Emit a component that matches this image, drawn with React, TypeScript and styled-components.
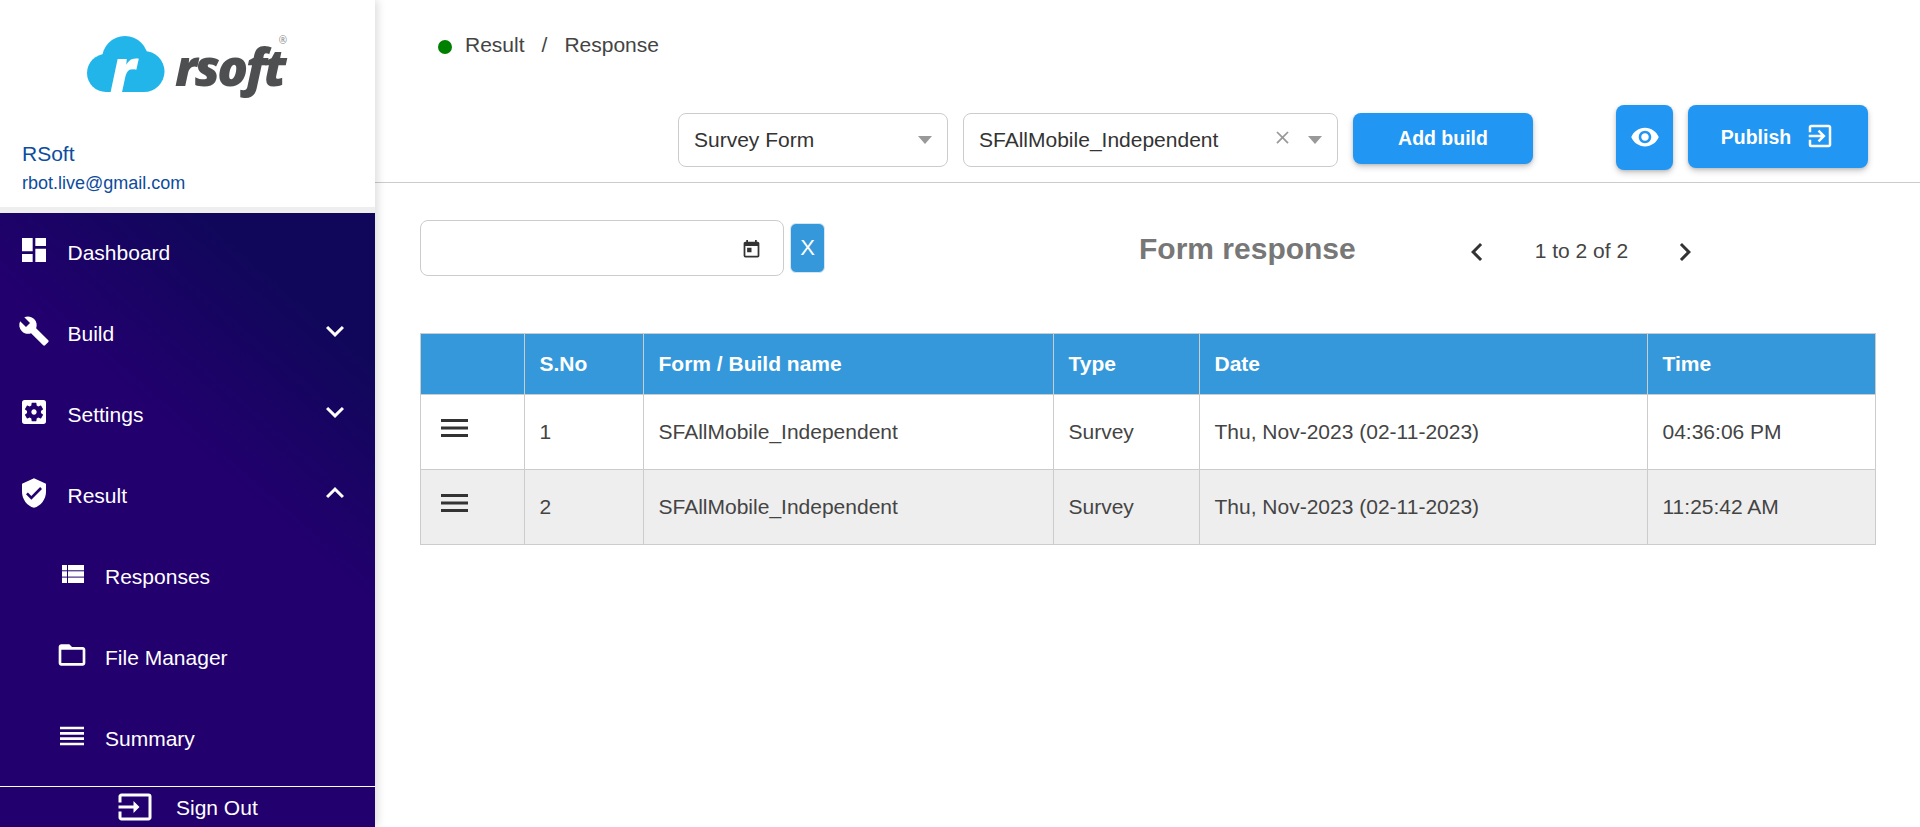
import React from "react";
import styled, { createGlobalStyle } from "styled-components";
import {
  MdDashboard,
  MdBuild,
  MdSettingsApplications,
  MdVerifiedUser,
  MdFolderOpen,
  MdReorder,
  MdInput,
  MdExpandMore,
  MdExpandLess,
  MdVisibility,
  MdOutlineExitToApp,
  MdToday,
  MdChevronLeft,
  MdChevronRight,
  MdClose,
} from "react-icons/md";

const GlobalStyle = createGlobalStyle`
  html, body {
    margin: 0;
    padding: 0;
    background: #fff;
    font-family: "Liberation Sans", Arial, sans-serif;
    font-size: 21px;
    color: #444;
  }
  * { box-sizing: border-box; }
`;

const Page = styled.div`
  display: flex;
  width: 1920px;
  height: 827px;
  overflow: hidden;
`;

const Sidebar = styled.aside`
  flex: 0 0 375px;
  height: 827px;
  display: flex;
  flex-direction: column;
  box-shadow: 3px 0 8px rgba(0, 0, 0, 0.13);
  position: relative;
  z-index: 2;
`;

const SideHead = styled.div`
  height: 213px;
  background: #fff;
  border-bottom: 6px solid #eee;
`;

const LogoRow = styled.div`
  height: 141px;
  padding: 36px 0 0 87px;
  display: flex;
  align-items: flex-start;
`;

const LogoWord = styled.div`
  position: relative;
  margin-left: 10px;
  margin-top: -3px;
  font-family: "Open Sans", sans-serif;
  font-style: italic;
  font-weight: 800;
  font-size: 51px;
  line-height: 66px;
  letter-spacing: -2.8px;
  color: #4d4f51;
`;

const Registered = styled.span`
  position: absolute;
  top: 1px;
  right: -3px;
  font-size: 10px;
  line-height: 12px;
  letter-spacing: 0;
  font-style: normal;
  font-weight: 400;
  color: #888;
`;

const Profile = styled.div`
  padding-left: 22px;
  color: #0d4c9e;
`;

const ProfileName = styled.div`
  font-size: 21px;
  line-height: 26px;
`;

const ProfileMail = styled.div`
  font-size: 18px;
  line-height: 24px;
  margin-top: 4px;
`;

const SideBody = styled.div`
  flex: 1;
  display: flex;
  flex-direction: column;
  background: linear-gradient(41deg, #22006e 58%, #10075a 84%);
`;

const Menu = styled.nav`
  flex: 1;
`;

const MenuItem = styled.div<{ $sub?: boolean }>`
  height: 81px;
  padding: 0 22px 1px ${(p) => (p.$sub ? "56px" : "18px")};
  display: flex;
  align-items: center;
  color: #fff;
  font-size: 21px;
`;

const MenuIcon = styled.span<{ $sub?: boolean }>`
  flex: 0 0 32px;
  height: 32px;
  margin-top: -7px;
  margin-right: ${(p) => (p.$sub ? "17px" : "17.5px")};
  font-size: 32px;
  line-height: 0;
`;

const MenuLabel = styled.span`
  flex: 1;
`;

const Caret = styled.span`
  font-size: 36px;
  line-height: 0;
  margin-top: -7px;
`;

const SignOut = styled.div`
  height: 41px;
  border-top: 1px solid #fff;
  padding: 1px 0 0 117px;
  display: flex;
  align-items: center;
  gap: 23px;
  color: #fff;
  font-size: 21px;
`;

const SignOutIcon = styled.span`
  font-size: 36px;
  line-height: 0;
  margin-top: -1px;
`;

const Main = styled.main`
  flex: 1;
  min-width: 0;
`;

const TopBar = styled.header`
  height: 183px;
  border-bottom: 1px solid #ccc;
`;

const Crumbs = styled.div`
  height: 105px;
  padding: 32px 0 0 63px;
  display: flex;
  align-items: flex-start;
  line-height: 26px;
`;

const Dot = styled.span`
  width: 14px;
  height: 14px;
  margin: 7.5px 13px 0 0;
  border-radius: 50%;
  background: #008000;
`;

const Slash = styled.span`
  margin: 0 17px;
`;

const Toolbar = styled.div`
  display: flex;
  align-items: flex-start;
  padding-left: 303px;
`;

const Select = styled.div<{ $width: number; $gap: number }>`
  width: ${(p) => p.$width}px;
  height: 54px;
  margin: 8px ${(p) => p.$gap}px 0 0;
  padding: 0 16px 0 15px;
  display: flex;
  align-items: center;
  background: #fff;
  border: 1px solid #ccc;
  border-radius: 8px;
  color: #333;
`;

const SelectValue = styled.span`
  flex: 1;
`;

const ClearIcon = styled.span`
  font-size: 21px;
  line-height: 0;
  color: #999;
  margin: -6px 15px 0 0;
`;

const Arrow = styled.span`
  width: 0;
  height: 0;
  border-left: 7px solid transparent;
  border-right: 7px solid transparent;
  border-top: 8px solid #999;
  margin-right: -1px;
`;

const Button = styled.button<{ $width: number; $height: number; $top: number; $left: number }>`
  width: ${(p) => p.$width}px;
  height: ${(p) => p.$height}px;
  margin: ${(p) => p.$top}px 0 0 ${(p) => p.$left}px;
  padding: 0;
  display: flex;
  align-items: center;
  justify-content: center;
  border: 0;
  border-radius: 8px;
  background: #2196f3;
  color: #fff;
  font-family: inherit;
  font-size: 19.5px;
  font-weight: 700;
  box-shadow: 0 3px 6px rgba(0, 0, 0, 0.2), 0 1px 3px rgba(0, 0, 0, 0.12);
`;

const ButtonText = styled.span`
  padding-top: 2px;
`;

const ButtonIcon = styled.span<{ $size: number; $gap?: number }>`
  font-size: ${(p) => p.$size}px;
  line-height: 0;
  margin-left: ${(p) => p.$gap ?? 0}px;
  margin-top: -2px;
`;

const Content = styled.section`
  padding: 37px 45px 0;
`;

const FilterRow = styled.div`
  height: 56px;
  margin-bottom: 57px;
  display: flex;
  align-items: flex-start;
`;

const DateInput = styled.div`
  width: 364px;
  height: 56px;
  padding: 2px 21px 0 0;
  display: flex;
  align-items: center;
  justify-content: flex-end;
  border: 1px solid #ccc;
  border-radius: 8px;
  color: #333;
  font-size: 21px;
`;

const ClearButton = styled.button`
  width: 35px;
  height: 50px;
  margin: 3px 0 0 6px;
  padding: 0;
  border: 1px solid #d5e6f3;
  border-radius: 6px;
  background: #3498db;
  color: #fff;
  font-family: inherit;
  font-size: 22px;
`;

const Title = styled.h2`
  margin: 7px 0 0 314px;
  font-size: 30px;
  line-height: 44px;
  font-weight: 700;
  color: #777;
`;

const Pager = styled.div`
  margin: 12px 0 0 103px;
  display: flex;
  align-items: center;
  color: #444;
  line-height: 36px;
`;

const PagerIcon = styled.span`
  font-size: 36px;
  line-height: 0;
  color: #333;
  margin-top: 2px;
`;

const PagerText = styled.span`
  margin: 0 39px 0 40px;
`;

const Table = styled.table`
  width: 1455px;
  table-layout: fixed;
  border-collapse: collapse;
  font-size: 21px;
  color: #444;
`;

const Th = styled.th<{ $width: number }>`
  width: ${(p) => p.$width}px;
  height: 61px;
  padding: 0 15px;
  border: 1px solid #ccc;
  background: #3498db;
  color: #fff;
  font-size: 21px;
  font-weight: 700;
  text-align: left;
`;

const Row = styled.tr<{ $shaded?: boolean }>`
  background: ${(p) => (p.$shaded ? "#eee" : "#fff")};
`;

const Td = styled.td`
  height: 75px;
  padding: 0 15px;
  border: 1px solid #ccc;
`;

const Handle = styled.svg`
  display: block;
  margin: -8px 0 0 5px;
`;

const columns = [
  { label: "", width: 103.5 },
  { label: "S.No", width: 119 },
  { label: "Form / Build name", width: 410 },
  { label: "Type", width: 146 },
  { label: "Date", width: 448 },
  { label: "Time", width: 228.5 },
];

const rows = [
  { no: 1, name: "SFAllMobile_Independent", type: "Survey", date: "Thu, Nov-2023 (02-11-2023)", time: "04:36:06 PM" },
  { no: 2, name: "SFAllMobile_Independent", type: "Survey", date: "Thu, Nov-2023 (02-11-2023)", time: "11:25:42 AM" },
];

const CloudMark = () => (
  <svg width="78" height="57" viewBox="87 36 78 57" overflow="visible">
    <g fill="#21b5ea">
      <circle cx="106" cy="73" r="19" />
      <circle cx="125" cy="59" r="23" />
      <circle cx="144" cy="71.5" r="20.5" />
      <rect x="106" y="70" width="38" height="22" />
    </g>
    <text x="110" y="92" fontFamily="'Open Sans', sans-serif" fontStyle="italic" fontWeight="800" fontSize="60" fill="#fff">
      r
    </text>
  </svg>
);

const HandleIcon = () => (
  <Handle width="27" height="18" viewBox="0 0 27 18" fill="#333">
    <rect y="0" width="27" height="3" />
    <rect y="7.5" width="27" height="3" />
    <rect y="15" width="27" height="3" />
  </Handle>
);

const ResponsesIcon = () => (
  <svg width="32" height="32" viewBox="0 0 32 32" fill="currentColor">
    <rect x="6" y="7" width="5" height="5.3" />
    <rect x="6" y="13.3" width="5" height="5.3" />
    <rect x="6" y="19.6" width="5" height="5.4" />
    <rect x="12" y="7" width="16" height="5.3" />
    <rect x="12" y="13.3" width="16" height="5.3" />
    <rect x="12" y="19.6" width="16" height="5.4" />
  </svg>
);

export default function App() {
  return (
    <Page>
      <GlobalStyle />
      <Sidebar>
        <SideHead>
          <LogoRow>
            <CloudMark />
            <LogoWord>
              rsoft
              <Registered>®</Registered>
            </LogoWord>
          </LogoRow>
          <Profile>
            <ProfileName>RSoft</ProfileName>
            <ProfileMail>rbot.live@gmail.com</ProfileMail>
          </Profile>
        </SideHead>
        <SideBody>
          <Menu>
            <MenuItem>
              <MenuIcon><MdDashboard /></MenuIcon>
              <MenuLabel>Dashboard</MenuLabel>
            </MenuItem>
            <MenuItem>
              <MenuIcon><MdBuild /></MenuIcon>
              <MenuLabel>Build</MenuLabel>
              <Caret><MdExpandMore /></Caret>
            </MenuItem>
            <MenuItem>
              <MenuIcon><MdSettingsApplications /></MenuIcon>
              <MenuLabel>Settings</MenuLabel>
              <Caret><MdExpandMore /></Caret>
            </MenuItem>
            <MenuItem>
              <MenuIcon><MdVerifiedUser /></MenuIcon>
              <MenuLabel>Result</MenuLabel>
              <Caret><MdExpandLess /></Caret>
            </MenuItem>
            <MenuItem $sub>
              <MenuIcon $sub><ResponsesIcon /></MenuIcon>
              <MenuLabel>Responses</MenuLabel>
            </MenuItem>
            <MenuItem $sub>
              <MenuIcon $sub><MdFolderOpen /></MenuIcon>
              <MenuLabel>File Manager</MenuLabel>
            </MenuItem>
            <MenuItem $sub>
              <MenuIcon $sub><MdReorder /></MenuIcon>
              <MenuLabel>Summary</MenuLabel>
            </MenuItem>
          </Menu>
          <SignOut>
            <SignOutIcon><MdInput /></SignOutIcon>
            Sign Out
          </SignOut>
        </SideBody>
      </Sidebar>
      <Main>
        <TopBar>
          <Crumbs>
            <Dot />
            Result
            <Slash>/</Slash>
            Response
          </Crumbs>
          <Toolbar>
            <Select $width={270} $gap={15}>
              <SelectValue>Survey Form</SelectValue>
              <Arrow />
            </Select>
            <Select $width={375} $gap={0}>
              <SelectValue>SFAllMobile_Independent</SelectValue>
              <ClearIcon><MdClose /></ClearIcon>
              <Arrow />
            </Select>
            <Button $width={180} $height={51} $top={8} $left={15}>Add build</Button>
            <Button $width={57} $height={65} $top={0} $left={83}>
              <ButtonIcon $size={30}><MdVisibility /></ButtonIcon>
            </Button>
            <Button $width={180} $height={63} $top={0} $left={15}>
              <ButtonText>Publish</ButtonText>
              <ButtonIcon $size={30} $gap={14}><MdOutlineExitToApp /></ButtonIcon>
            </Button>
          </Toolbar>
        </TopBar>
        <Content>
          <FilterRow>
            <DateInput><MdToday /></DateInput>
            <ClearButton>X</ClearButton>
            <Title>Form response</Title>
            <Pager>
              <PagerIcon><MdChevronLeft /></PagerIcon>
              <PagerText>1 to 2 of 2</PagerText>
              <PagerIcon><MdChevronRight /></PagerIcon>
            </Pager>
          </FilterRow>
          <Table>
            <thead>
              <tr>
                {columns.map((col) => (
                  <Th key={col.label} $width={col.width}>{col.label}</Th>
                ))}
              </tr>
            </thead>
            <tbody>
              {rows.map((row) => (
                <Row key={row.no} $shaded={row.no === 2}>
                  <Td><HandleIcon /></Td>
                  <Td>{row.no}</Td>
                  <Td>{row.name}</Td>
                  <Td>{row.type}</Td>
                  <Td>{row.date}</Td>
                  <Td>{row.time}</Td>
                </Row>
              ))}
            </tbody>
          </Table>
        </Content>
      </Main>
    </Page>
  );
}
